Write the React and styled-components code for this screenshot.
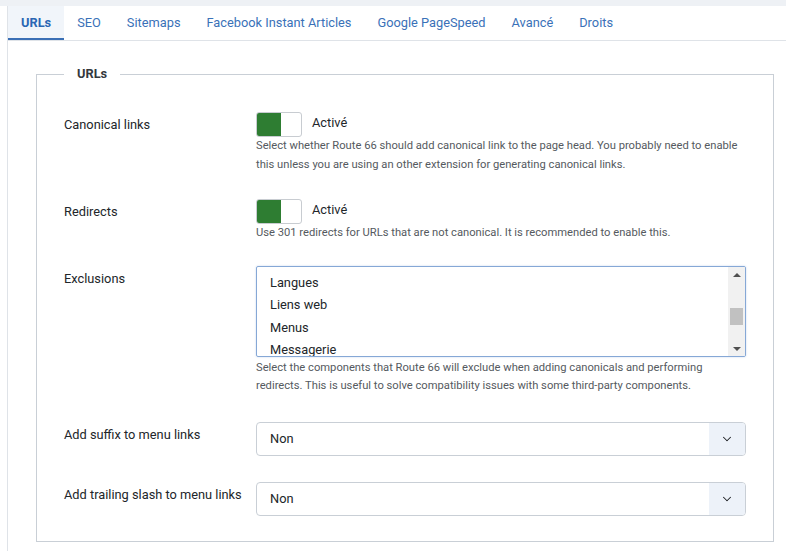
import styled, { createGlobalStyle } from "styled-components";
import { ChevronDown } from "lucide-react";

const GlobalStyle = createGlobalStyle`
    body {
        margin: 0;
        background: #ffffff;
        font-family: Roboto, "Liberation Sans", sans-serif;
        color: #22262a;
    }
`;

const TopStrip = styled.div`
    height: 6px;
    background: #eef1f5;
`;

const Card = styled.div`
    margin-left: 7px;
    border-left: 1px solid #dfe3e8;
    background: #fff;
    min-height: 545px;
`;

const TabBar = styled.div`
    display: flex;
    height: 34px;
    border-bottom: 1px solid #dfe3e8;
`;

const Tab = styled.div`
    padding: 0 13px;
    height: 34px;
    line-height: 33px;
    box-sizing: border-box;
    font-size: 12.8px;
    color: ${(p) => (p.$active ? "#2a66b3" : "#3a71b8")};
    font-weight: ${(p) => (p.$active ? 700 : 400)};
    background: ${(p) => (p.$active ? "#f1f5fa" : "transparent")};
    border-bottom: 2px solid ${(p) => (p.$active ? "#3a6fb5" : "transparent")};
`;

const Content = styled.div`
    padding: 24px 12px 0 28px;
`;

const Fieldset = styled.fieldset`
    margin: 0;
    border: 1px solid #c9cfd6;
    padding: 29px 27px 25px 27px;
    min-width: 0;
`;

const Legend = styled.legend`
    padding: 0 13px;
    font-size: 12.8px;
    line-height: 18px;
    font-weight: 700;
    color: #33383d;
`;

const Rows = styled.div`
    display: flex;
    flex-direction: column;
`;

const Row = styled.div`
    display: grid;
    grid-template-columns: 192px 1fr;
    margin-top: ${(p) => p.$top ?? 26}px;
`;

const Label = styled.div`
    font-size: 12.8px;
    line-height: 18px;
    padding-top: 4px;
    color: #22262a;
`;

const Control = styled.div`
    display: flex;
    flex-direction: column;
`;

const SwitchLine = styled.div`
    display: flex;
    align-items: flex-start;
    gap: 10px;
`;

const Switch = styled.div`
    width: 46px;
    height: 25px;
    box-sizing: border-box;
    border: 1px solid #c8ccd1;
    border-radius: 3px;
    overflow: hidden;
    display: flex;
`;

const SwitchOn = styled.div`
    width: 24px;
    background: #2e7d32;
`;

const SwitchText = styled.span`
    padding-top: 2px;
    font-size: 12.8px;
    line-height: 18px;
    color: #22262a;
`;

const Desc = styled.div`
    margin-top: ${(p) => p.$gap || 0}px;
    font-size: 11.2px;
    line-height: 18.5px;
    color: #555a60;
`;

const ListBox = styled.div`
    display: flex;
    height: 91px;
    box-sizing: border-box;
    border: 1px solid #86a8d6;
    border-radius: 2px;
    box-shadow: 0 0 2px rgba(80, 130, 200, 0.35);
    overflow: hidden;
`;

const ListItems = styled.div`
    flex: 1;
    padding: 5px 0 0 13px;
    overflow: hidden;
`;

const ListItem = styled.div`
    font-size: 12.8px;
    line-height: 22.5px;
    color: #22262a;
`;

const Scrollbar = styled.div`
    width: 17px;
    background: #f1f1f1;
    display: flex;
    flex-direction: column;
    align-items: center;
    justify-content: space-between;
    padding: 6px 0 5px;
    box-sizing: border-box;
`;

const Arrow = styled.div`
    width: 0;
    height: 0;
    border-left: 4px solid transparent;
    border-right: 4px solid transparent;
    ${(p) =>
        p.$up
            ? "border-bottom: 4px solid #505050;"
            : "border-top: 4px solid #505050;"}
`;

const Thumb = styled.div`
    width: 13px;
    height: 17px;
    background: #c1c1c1;
    margin-top: 10px;
`;

const Select = styled.div`
    display: flex;
    height: 34px;
    box-sizing: border-box;
    border: 1px solid #c9cfd6;
    border-radius: 4px;
    overflow: hidden;
`;

const SelectValue = styled.div`
    flex: 1;
    padding-left: 13px;
    font-size: 12.8px;
    line-height: 32px;
    color: #22262a;
`;

const SelectButton = styled.div`
    width: 36px;
    background: #edf2f9;
    display: flex;
    align-items: center;
    justify-content: center;
    color: #1c1f22;
`;

const tabs = [
    "URLs",
    "SEO",
    "Sitemaps",
    "Facebook Instant Articles",
    "Google PageSpeed",
    "Avancé",
    "Droits",
];

function Toggle({ text }) {
    return (
        <SwitchLine>
            <Switch>
                <SwitchOn />
            </Switch>
            <SwitchText>{text}</SwitchText>
        </SwitchLine>
    );
}

function Dropdown({ value }) {
    return (
        <Select>
            <SelectValue>{value}</SelectValue>
            <SelectButton>
                <ChevronDown size={14} strokeWidth={1.75} />
            </SelectButton>
        </Select>
    );
}

export default function App() {
    return (
        <>
            <GlobalStyle />
            <TopStrip />
            <Card>
                <TabBar>
                    {tabs.map((t, i) => (
                        <Tab key={t} $active={i === 0}>
                            {t}
                        </Tab>
                    ))}
                </TabBar>
                <Content>
                    <Fieldset>
                        <Legend>URLs</Legend>
                        <Rows>
                            <Row $top={0}>
                                <Label>Canonical links</Label>
                                <Control>
                                    <Toggle text="Activé" />
                                    <Desc>
                                        Select whether Route 66 should add canonical link to the page head. You probably need to enable
                                        this unless you are using an other extension for generating canonical links.
                                    </Desc>
                                </Control>
                            </Row>
                            <Row $top={25}>
                                <Label>Redirects</Label>
                                <Control>
                                    <Toggle text="Activé" />
                                    <Desc>
                                        Use 301 redirects for URLs that are not canonical. It is recommended to enable this.
                                    </Desc>
                                </Control>
                            </Row>
                            <Row $top={23}>
                                <Label>Exclusions</Label>
                                <Control>
                                    <ListBox>
                                        <ListItems>
                                            <ListItem>Langues</ListItem>
                                            <ListItem>Liens web</ListItem>
                                            <ListItem>Menus</ListItem>
                                            <ListItem>Messagerie</ListItem>
                                        </ListItems>
                                        <Scrollbar>
                                            <Arrow $up />
                                            <Thumb />
                                            <Arrow />
                                        </Scrollbar>
                                    </ListBox>
                                    <Desc $gap={2}>
                                        Select the components that Route 66 will exclude when adding canonicals and performing
                                        redirects. This is useful to solve compatibility issues with some third-party components.
                                    </Desc>
                                </Control>
                            </Row>
                            <Row $top={26}>
                                <Label>Add suffix to menu links</Label>
                                <Control>
                                    <Dropdown value="Non" />
                                </Control>
                            </Row>
                            <Row $top={26}>
                                <Label>Add trailing slash to menu links</Label>
                                <Control>
                                    <Dropdown value="Non" />
                                </Control>
                            </Row>
                        </Rows>
                    </Fieldset>
                </Content>
            </Card>
        </>
    );
}
